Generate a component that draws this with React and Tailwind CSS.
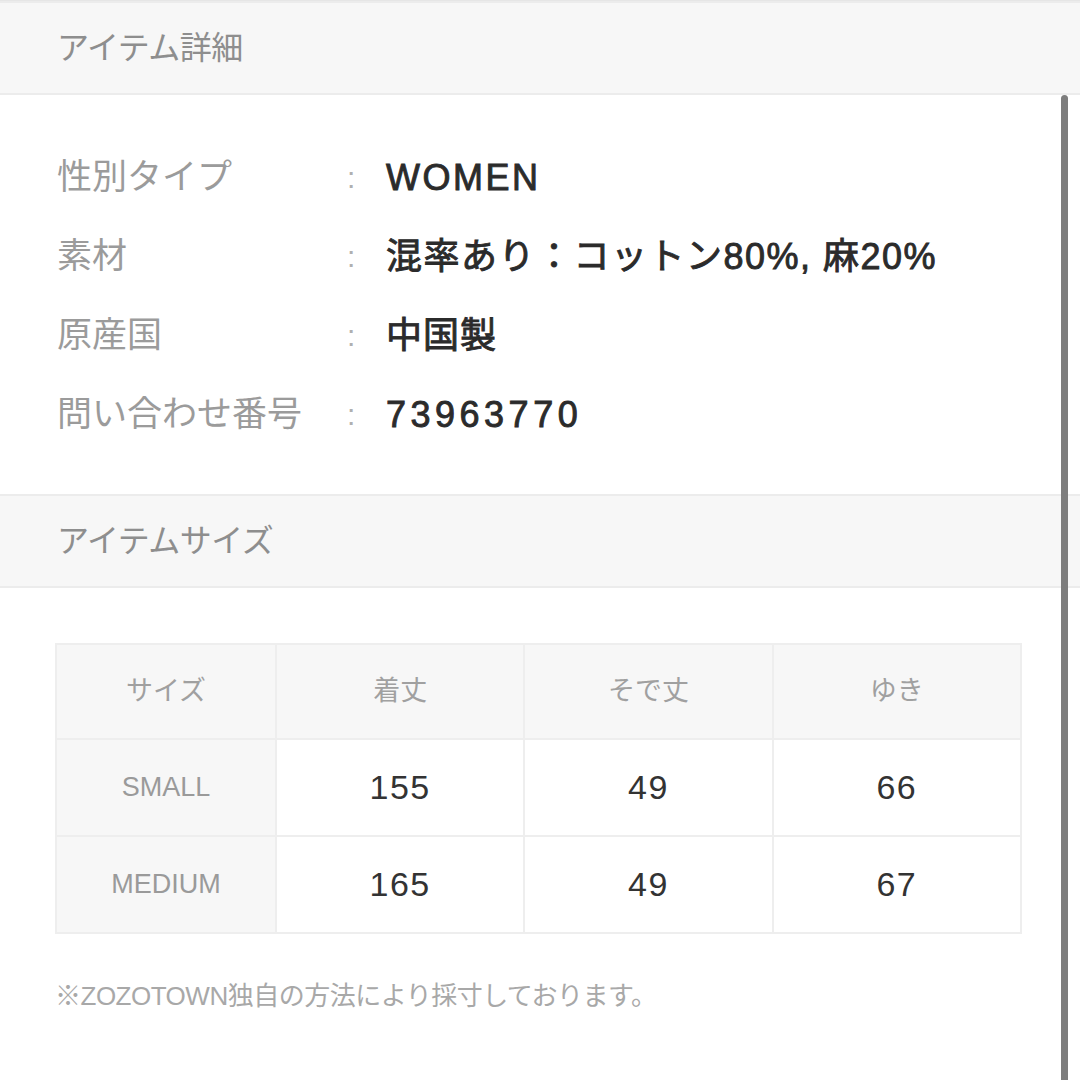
const specs = [
  { label: "性別タイプ", value: "WOMEN", track: "tracking-[2.5px]" },
  { label: "素材", value: "混率あり：コットン80%, 麻20%", track: "tracking-[1.5px]" },
  { label: "原産国", value: "中国製", track: "tracking-[1px]" },
  { label: "問い合わせ番号", value: "73963770", track: "tracking-[4.5px]" },
];

const columns = ["サイズ", "着丈", "そで丈", "ゆき"];

const sizes = [
  { name: "SMALL", values: [155, 49, 66] },
  { name: "MEDIUM", values: [165, 49, 67] },
];

const jp = "font-['Liberation_Sans','Noto_Sans_CJK_JP',sans-serif]";

function SectionHeader({ title }) {
  return (
    <div className="h-[94px] flex items-center px-[57px] bg-[#f7f7f7] border-y-2 border-[#ececec]">
      <span className="text-[32px] text-[#8e8e8e] tracking-[-0.5px]">{title}</span>
    </div>
  );
}

export default function App() {
  return (
    <div className={`relative w-[1080px] h-[1080px] overflow-hidden bg-white ${jp}`}>
      <div className="h-[3px] bg-[#e6e6e6]" />
      <div className="-mt-[2px]">
        <SectionHeader title="アイテム詳細" />
      </div>

      <div className="pt-[43px] pb-[40px]">
        {specs.map((s) => (
          <div key={s.label} className="h-[79px] flex items-center pl-[57px]">
            <span className="w-[290px] text-[35px] text-[#9b9b9b]">{s.label}</span>
            <span className="w-[39px] text-[30px] text-[#b0b0b0]">:</span>
            <span className={`text-[36px] font-normal text-[#2b2b2b] [-webkit-text-stroke:0.9px_#2b2b2b] ${s.track}`}>
              {s.value}
            </span>
          </div>
        ))}
      </div>

      <SectionHeader title="アイテムサイズ" />

      <div className="pt-[55px] pl-[55px] pr-[58px]">
        <table className="w-full border-collapse table-fixed">
          <thead>
            <tr className="h-[95px]">
              {columns.map((c, i) => (
                <th
                  key={c}
                  className={`${i === 0 ? "w-[220px]" : ""} bg-[#f7f7f7] border-2 border-[#eeeeee] text-[27px] font-normal text-[#a0a0a0]`}
                >
                  {c}
                </th>
              ))}
            </tr>
          </thead>
          <tbody>
            {sizes.map((row) => (
              <tr key={row.name} className="h-[97px]">
                <td className="bg-[#f7f7f7] border-2 border-[#eeeeee] text-center text-[27px] text-[#9a9a9a]">
                  {row.name}
                </td>
                {row.values.map((v, i) => (
                  <td key={i} className="border-2 border-[#eeeeee] text-center text-[34px] text-[#333333] tracking-[1.5px]">
                    {v}
                  </td>
                ))}
              </tr>
            ))}
          </tbody>
        </table>

        <p className="mt-[43px] text-[26px] text-[#a8a8a8] tracking-[-0.5px]">
          ※ZOZOTOWN独自の方法により採寸しております。
        </p>
      </div>

      <div className="absolute right-[12px] top-[95px] bottom-0 w-[7px] rounded-t-full bg-[#7d7d7d]" />
    </div>
  );
}
